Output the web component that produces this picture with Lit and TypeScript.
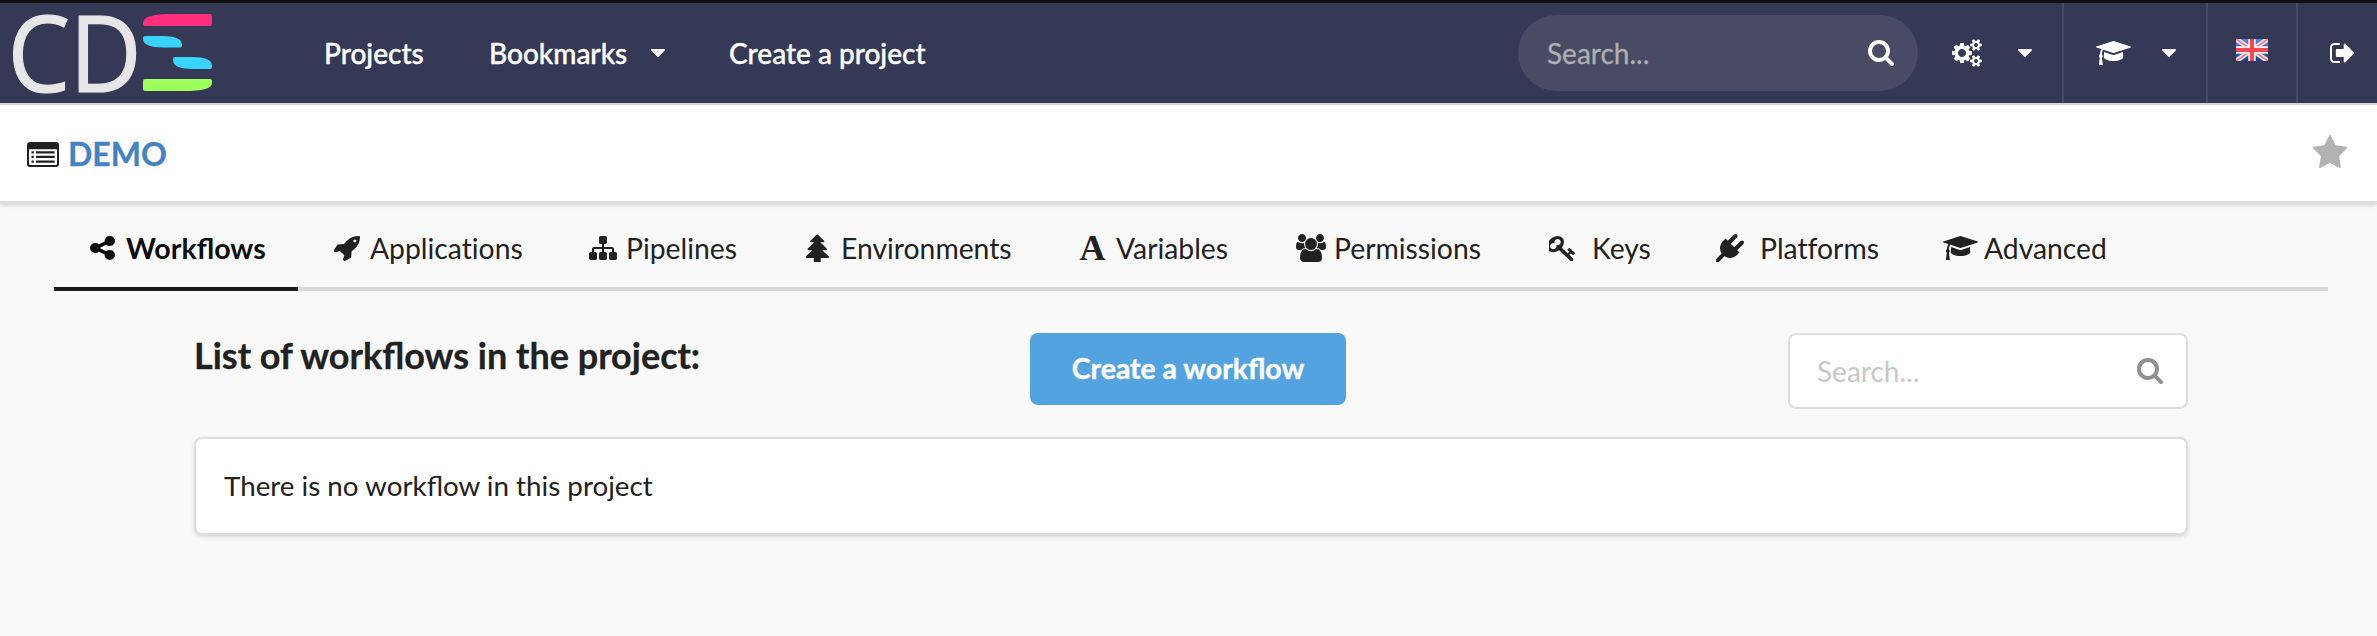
import { LitElement, html, svg, css } from "lit";
import { customElement, property } from "lit/decorators.js";

interface Glyph {
  box: string;
  body: unknown;
}

const glyphs: Record<string, Glyph> = {
  share: {
    box: "128 128 1536 1536",
    body: svg`<path d="M1344 1024q133 0 226.500 93.500t93.500 226.500-93.500 226.500-226.500 93.500-226.500-93.500-93.500-226.500q0-12 2-34l-360-180q-92 86-218 86-133 0-226.500-93.500t-93.500-226.500 93.500-226.500 226.500-93.500q126 0 218 86l360-180q-2-22-2-34 0-133 93.500-226.500t226.500-93.500 226.500 93.500 93.500 226.500-93.500 226.500-226.500 93.500q-126 0-218-86l-360 180q2 22 2 34t-2 34l360 180q92-86 218-86z"/>`,
  },
  rocket: {
    box: "52 128 1612 1620",
    body: svg`<path d="M1440 448q0-40-28-68t-68-28-68 28-28 68 28 68 68 28 68-28 28-68zm224-288q0 249-75.500 430.500t-253.500 360.500q-81 80-195 176l-20 379q-2 16-16 26l-384 224q-7 4-16 4-12 0-23-9l-64-64q-13-14-8-32l85-276-281-281-276 85q-3 1-9 1-14 0-23-9l-64-64q-17-19-5-39l224-384q10-14 26-16l379-20q96-114 176-195 188-187 358-258t431-71q14 0 24 9.500t10 22.500z"/>`,
  },
  sitemap: {
    box: "0 128 1792 1536",
    body: svg`<path d="M1792 1248v320q0 40-28 68t-68 28h-320q-40 0-68-28t-28-68v-320q0-40 28-68t68-28h96v-192h-512v192h96q40 0 68 28t28 68v320q0 40-28 68t-68 28h-320q-40 0-68-28t-28-68v-320q0-40 28-68t68-28h96v-192h-512v192h96q40 0 68 28t28 68v320q0 40-28 68t-68 28h-320q-40 0-68-28t-28-68v-320q0-40 28-68t68-28h96v-192q0-52 38-90t90-38h512v-192h-96q-40 0-68-28t-28-68v-320q0-40 28-68t68-28h320q40 0 68 28t28 68v320q0 40-28 68t-68 28h-96v192h512q52 0 90 38t38 90v192h96q40 0 68 28t28 68z"/>`,
  },
  tree: {
    box: "176 0 1440 1824",
    body: svg`<path d="M1616 1504q0 26-19 45t-45 19h-462q1 17 6 87.500t5 108.500q0 25-18 42.500t-43 17.500h-320q-25 0-43-17.500t-18-42.500q0-38 5-108.500t6-87.500h-462q-26 0-45-19t-19-45 19-45l402-403h-229q-26 0-45-19t-19-45 19-45l402-403h-197q-26 0-45-19t-19-45 19-45l384-384q19-19 45-19t45 19l384 384q19 19 19 45t-19 45-45 19h-197l402 403q19 19 19 45t-19 45-45 19h-229l402 403q19 19 19 45z"/>`,
  },
  users: {
    box: "0 0 1920 1792",
    body: svg`<path d="M593 896q-162 5-265 128h-134q-82 0-138-40.500t-56-118.500q0-353 124-353 6 0 43.500 21t97.500 42.500 119 21.500q67 0 133-23-5 37-5 66 0 139 81 256zm1071 637q0 120-73 189.500t-194 69.500h-874q-121 0-194-69.500t-73-189.500q0-53 3.500-103.500t14-109 26.500-108.500 43-97.500 62-81 85.500-53.500 111.500-20q10 0 43 21.500t73 48 107 48 135 21.500 135-21.500 107-48 73-48 43-21.500q61 0 111.500 20t85.500 53.500 62 81 43 97.500 26.500 108.500 14 109 3.500 103.500zm-1024-1277q0 106-75 181t-181 75-181-75-75-181 75-181 181-75 181 75 75 181zm704 384q0 159-112.500 271.500t-271.500 112.500-271.500-112.500-112.500-271.500 112.500-271.500 271.500-112.500 271.500 112.500 112.500 271.500zm576 225q0 78-56 118.500t-138 40.500h-134q-103-123-265-128 81-117 81-256 0-29-5-66 66 23 133 23 59 0 119-21.500t97.500-42.500 43.500-21q124 0 124 353zm-128-609q0 106-75 181t-181 75-181-75-75-181 75-181 181-75 181 75 75 181z"/>`,
  },
  key: {
    box: "128 128 1556 1576",
    body: svg`<path d="M832 512q0-80-56-136t-136-56-136 56-56 136q0 42 19 83-41-19-83-19-80 0-136 56t-56 136 56 136 136 56 136-56 56-136q0-42-19-83 41 19 83 19 80 0 136-56t56-136zm851 704q0 17-49 66t-66 49q-9 0-28.500-16t-36.500-33-38.500-40-24.500-26l-96 96 220 220q28 28 28 68 0 42-39 81t-81 39q-40 0-68-28l-671-671q-176 131-365 131-163 0-265.500-102.500t-102.500-265.500q0-160 95-313t248-248 313-95q163 0 265.500 102.500t102.500 265.500q0 189-131 365l355 355 96-96q-3-3-26-24.500t-40-38.500-33-36.500-16-28.500q0-17 49-66t66-49q13 0 23 10 6 6 46 44.500t82 79.500 86.500 86 73 78 28.500 41z"/>`,
  },
  plug: {
    box: "0 0 1792 1792",
    body: svg`<path d="M1755 453q37 38 37 90.500t-37 90.500l-401 400 150 150-160 160q-163 163-389.500 186.500t-411.500-100.500l-362 362h-181v-181l362-362q-124-185-100.500-411.500t186.500-389.500l160-160 150 150 400-401q38-37 91-37t90 37 37 90.500-37 90.500l-400 401 234 234 401-400q38-37 91-37t90 37z"/>`,
  },
  cap: {
    box: "0 128 2304 1536",
    body: svg`<path d="M1774 836l18 316q4 69-82 128t-235 93.500-323 34.500-323-34.500-235-93.500-82-128l18-316 574 181q22 7 48 7t48-7zm530-324q0 23-22 31l-1120 352q-4 1-10 1t-10-1l-652-206q-43 34-71 111.500t-34 178.500q63 36 63 109 0 69-58 107l58 433q2 14-8 25-9 11-24 11h-192q-15 0-24-11-10-11-8-25l58-433q-58-38-58-107 0-73 65-111 11-207 98-330l-333-104q-22-8-22-31t22-31l1120-352q4-1 10-1t10 1l1120 352q22 8 22 31z"/>`,
  },
  cogs: {
    box: "0 0 1920 1792",
    body: svg`<path d="M896 896q0-106-75-181t-181-75-181 75-75 181 75 181 181 75 181-75 75-181zm768 512q0-52-38-90t-90-38-90 38-38 90q0 53 37.500 90.500t90.500 37.500 90.500-37.500 37.500-90.500zm0-1024q0-52-38-90t-90-38-90 38-38 90q0 53 37.500 90.500t90.500 37.500 90.500-37.500 37.500-90.500zm-384 421v185q0 10-7 19.500t-16 10.500l-155 24q-11 35-32 76 34 48 90 115 7 11 7 20 0 12-7 19-23 30-82.500 89.500t-78.500 59.500q-11 0-21-7l-115-90q-37 19-77 31-11 108-23 155-7 24-30 24h-186q-11 0-20-7.500t-10-17.500l-23-153q-34-10-75-31l-118 89q-7 7-20 7-11 0-21-8-144-133-144-160 0-9 7-19 10-14 41-53t47-61q-23-44-35-82l-152-24q-10-1-17-9.500t-7-19.500v-185q0-10 7-19.500t16-10.500l155-24q11-35 32-76-34-48-90-115-7-11-7-20 0-12 7-20 22-30 82-89t79-59q11 0 21 7l115 90q34-18 77-32 11-108 23-154 7-24 30-24h186q11 0 20 7.500t10 17.500l23 153q34 10 75 31l118-89q8-7 20-7 11 0 21 8 144 133 144 160 0 8-7 19-12 16-42 54t-45 60q23 48 34 82l152 23q10 2 17 10.500t7 19.500zm640 533v140q0 16-149 31-12 27-30 52 51 113 51 138 0 4-4 7-122 71-124 71-8 0-46-47t-52-68q-20 2-30 2t-30-2q-14 21-52 68t-46 47q-2 0-124-71-4-3-4-7 0-25 51-138-18-25-30-52-149-15-149-31v-140q0-16 149-31 13-29 30-52-51-113-51-138 0-4 4-7 4-2 35-20t59-34 30-16q8 0 46 46.500t52 67.500q20-2 30-2t30 2q51-71 92-112l6-2q4 0 124 70 4 3 4 7 0 25-51 138 17 23 30 52 149 15 149 31zm0-1024v140q0 16-149 31-12 27-30 52 51 113 51 138 0 4-4 7-122 71-124 71-8 0-46-47t-52-68q-20 2-30 2t-30-2q-14 21-52 68t-46 47q-2 0-124-71-4-3-4-7 0-25 51-138-18-25-30-52-149-15-149-31v-140q0-16 149-31 13-29 30-52-51-113-51-138 0-4 4-7 4-2 35-20t59-34 30-16q8 0 46 46.500t52 67.500q20-2 30-2t30 2q51-71 92-112l6-2q4 0 124 70 4 3 4 7 0 25-51 138 17 23 30 52 149 15 149 31z"/>`,
  },
  search: {
    box: "64 128 1664 1664",
    body: svg`<path d="M1216 832q0-185-131.500-316.500t-316.500-131.500-316.500 131.500-131.500 316.500 131.500 316.500 316.500 131.500 316.500-131.500 131.500-316.500zm512 832q0 52-38 90t-90 38q-54 0-90-38l-343-342q-179 124-399 124-143 0-273.500-55.500t-225-150-150-225-55.500-273.500 55.500-273.500 150-225 225-150 273.500-55.500 273.500 55.500 225 150 150 225 55.500 273.500q0 220-124 399l343 343q37 37 37 90z"/>`,
  },
  signout: {
    box: "64 256 1568 1280",
    body: svg`<path d="M704 1440q0 4 1 20t.5 26.500-3 23.500-10 19.500-20.500 6.500h-320q-119 0-203.500-84.500t-84.500-203.500v-704q0-119 84.500-203.500t203.500-84.500h320q13 0 22.500 9.500t9.500 22.500q0 4 1 20t.5 26.500-3 23.500-10 19.500-20.500 6.500h-320q-66 0-113 47t-47 113v704q0 66 47 113t113 47h312l11.500 1 11.500 3 8 5.500 7 9 2 13.500zm928-544q0 26-19 45l-544 544q-19 19-45 19t-45-19-19-45v-288h-448q-26 0-45-19t-19-45v-384q0-26 19-45t45-19h448v-288q0-26 19-45t45-19 45 19l544 544q19 19 19 45z"/>`,
  },
  star: {
    box: "64 32 1664 1588",
    body: svg`<path d="M1728 647q0 22-26 48l-363 354 86 500q1 7 1 20 0 21-10.500 35.500t-30.500 14.500q-19 0-40-12l-449-236-449 236q-22 12-40 12-21 0-31.500-14.500t-10.500-35.500q0-6 2-20l86-500-364-354q-25-27-25-48 0-37 56-46l502-73 225-455q19-41 49-41t49 41l225 455 502 73q56 9 56 46z"/>`,
  },
  caret: {
    box: "384 640 1024 576",
    body: svg`<path d="M1408 704q0 26-19 45l-448 448q-19 19-45 19t-45-19l-448-448q-19-19-19-45t19-45 45-19h896q26 0 45 19t19 45z"/>`,
  },
  list: {
    box: "0 0 32 25",
    body: svg`<path fill-rule="evenodd" d="M3 0h26a3 3 0 0 1 3 3v19a3 3 0 0 1-3 3H3a3 3 0 0 1-3-3V3a3 3 0 0 1 3-3zM2 7.300v14.500q0 1.200 1.200 1.200h25.600q1.200 0 1.200-1.200V7.300z"/><path d="M4.500 9.200h2.300v2.300H4.500zm0 4.600h2.300v2.300H4.500zm0 4.600h2.300v2.300H4.500zM9 9.200h18.600v2.300H9zm0 4.600h18.600v2.300H9zm0 4.600h18.600v2.300H9z"/>`,
  },
};

@customElement("ui-icon")
class UiIcon extends LitElement {
  @property() name = "";
  @property({ type: Number }) w = 28;
  @property({ type: Number }) h = 28;

  static styles = css`
    :host {
      display: inline-flex;
      flex: none;
      align-items: center;
      justify-content: center;
    }
    .glyph {
      display: block;
      flex: none;
      fill: currentColor;
    }
  `;

  render() {
    const g = glyphs[this.name];
    return html`<svg class="glyph" width=${this.w} height=${this.h} viewBox=${g.box} preserveAspectRatio="none">
      ${g.body}
    </svg>`;
  }
}

interface Tab {
  icon: string;
  label: string;
  w: number;
  h: number;
  width: number;
  spaced?: boolean;
}

const tabs: Tab[] = [
  { icon: "share", label: "Workflows", w: 25, h: 24, width: 244 },
  { icon: "rocket", label: "Applications", w: 26, h: 25, width: 256 },
  { icon: "sitemap", label: "Pipelines", w: 28, h: 24, width: 215 },
  { icon: "tree", label: "Environments", w: 23, h: 28, width: 275 },
  { icon: "letter", label: "Variables", w: 26, h: 24, width: 218 },
  { icon: "users", label: "Permissions", w: 30, h: 28, width: 251 },
  { icon: "key", label: "Keys", w: 26, h: 25, width: 168, spaced: true },
  { icon: "plug", label: "Platforms", w: 28, h: 28, width: 231, spaced: true },
  { icon: "cap", label: "Advanced", w: 35, h: 24, width: 226 },
];

@customElement("app-root")
class AppRoot extends LitElement {
  static styles = css`
    :host {
      display: block;
      box-sizing: border-box;
      height: 636px;
      overflow: hidden;
      background: #f9f9f9;
      color: #212121;
      font: 28px/34px Lato, sans-serif;
    }
    * {
      box-sizing: border-box;
    }
    .nav {
      display: flex;
      align-items: stretch;
      height: 105px;
      border-top: 3px solid #111;
      border-bottom: 2px solid #dededf;
      background: #353956;
      color: #fff;
    }
    .logo {
      flex: none;
      width: 292px;
      height: 100px;
    }
    .letters {
      font: 107px "Open Sans", sans-serif;
      fill: #e6e6e6;
      stroke: #e6e6e6;
      stroke-width: 1.2px;
    }
    .link {
      display: flex;
      align-items: center;
      padding: 0 32px 1px;
      white-space: nowrap;
      font-weight: 500;
      -webkit-text-stroke: 0.4px #fff;
    }
    .projects {
      width: 165px;
    }
    .bookmarks {
      width: 240px;
      justify-content: space-between;
    }
    .spacer {
      flex: 1;
    }
    .pill {
      display: flex;
      align-items: center;
      justify-content: space-between;
      width: 400px;
      height: 76px;
      margin-top: 12px;
      padding: 0 24px 0 29px;
      border-radius: 38px;
      background: #484b63;
      color: #b0b0b1;
      -webkit-text-stroke: 0.3px #b0b0b1;
    }
    .pill-icon {
      color: #fff;
    }
    .tool {
      display: flex;
      align-items: center;
      border-left: 2px solid #464a64;
    }
    .tool-cogs {
      width: 144px;
      padding-left: 34px;
      gap: 36px;
      border-left: none;
    }
    .tool-help {
      width: 144px;
      padding-left: 32px;
      gap: 31px;
    }
    .tool-flag {
      width: 90px;
      padding: 0 0 6px 28px;
    }
    .tool-exit {
      width: 81px;
      padding-left: 32px;
    }
    .title {
      display: flex;
      align-items: center;
      justify-content: space-between;
      height: 99px;
      padding: 0 30px 0 27px;
      background: #fff;
      border-bottom: 3px solid #dededf;
      box-shadow: 0 1px 4px rgba(34, 36, 38, 0.2);
    }
    .project {
      display: flex;
      align-items: center;
      gap: 9px;
      padding-top: 2px;
      color: #4183c4;
      font-size: 32px;
      line-height: 40px;
      font-weight: 700;
      -webkit-text-stroke: 0.3px #4183c4;
    }
    .project-icon {
      color: #212121;
    }
    .star {
      color: #b2b2b2;
      padding-bottom: 4px;
    }
    .tabs {
      display: flex;
      height: 87px;
      margin: 0 49px 0 54px;
      border-bottom: 4px solid #d9d9d9;
      font-size: 28.3px;
    }
    .tab {
      display: flex;
      flex: none;
      align-items: center;
      height: 87px;
      padding: 5px 0 4px 32px;
      white-space: nowrap;
      font-variant-ligatures: none;
    }
    .tab.active {
      border-bottom: 4px solid #1b1c1d;
      padding-bottom: 0;
      color: #0d0d0d;
      font-size: 28.6px;
      font-weight: 700;
      font-variant-ligatures: normal;
    }
    .tab-icon {
      width: 33px;
      margin-right: 7px;
    }
    .letter {
      display: inline-block;
      text-align: center;
      font: bold 36px/34px "Liberation Serif", serif;
    }
    .gap {
      width: 7px;
    }
    .content {
      margin: 42px 189px 0 194px;
    }
    .head {
      display: grid;
      grid-template-columns: 836px 316px 1fr;
      align-items: start;
      height: 104px;
    }
    .heading {
      margin: 0;
      font-size: 36px;
      line-height: 44px;
      font-weight: 700;
      -webkit-text-stroke: 0.3px #212121;
    }
    .button {
      display: flex;
      align-items: center;
      justify-content: center;
      height: 72px;
      padding-bottom: 3px;
      border-radius: 8px;
      background: #54a3e1;
      color: #fff;
      font-size: 28.4px;
      font-weight: 700;
      -webkit-text-stroke: 0.4px #fff;
    }
    .filter {
      display: flex;
      align-items: center;
      justify-content: space-between;
      justify-self: end;
      width: 400px;
      height: 76px;
      padding: 0 23px 0 27px;
      border: 2px solid #dededf;
      border-radius: 8px;
      background: #fff;
      color: #c7c7c7;
    }
    .filter-icon {
      color: #909090;
    }
    .panel {
      display: flex;
      align-items: center;
      height: 98px;
      padding: 0 28px;
      border: 2px solid #dededf;
      border-radius: 8px;
      background: #fff;
      box-shadow: 0 2px 4px rgba(34, 36, 38, 0.15);
      font-size: 27.75px;
    }
  `;

  private logo() {
    return html`<svg class="logo" viewBox="0 3 292 100">
      <text class="letters" transform="translate(7.500 91.500) scale(.93 1)">C</text>
      <text class="letters" transform="translate(69.500 91.500) scale(.93 1)">D</text>
      <path fill="#ff2e7e" d="M171 14h39q2 0 2 2v8q0 2-2 2h-65q-2 0-2-2v-1q0-9 28-9z" />
      <path fill="#38d4ff" d="M145 36h17q20 0 20 9v.500q0 2-2 2h-17q-20 0-20-9v-.500q0-2 2-2z" />
      <path fill="#38d4ff" d="M175 57h17q20 0 20 9v1q0 2-2 2h-17q-20 0-20-9v-1q0-2 2-2z" />
      <path fill="#9dff5c" d="M145 79h65q2 0 2 2v2q0 8-28 8h-39q-2 0-2-2v-8q0-2 2-2z" />
    </svg>`;
  }

  private flag() {
    return html`<svg width="32" height="22" viewBox="0 0 32 22">
      <defs>
        <linearGradient id="sheen" x1="0" y1="0" x2="0" y2="1">
          <stop offset="0" stop-color="#5f86cc" />
          <stop offset="1" stop-color="#1d3c8c" />
        </linearGradient>
      </defs>
      <rect width="32" height="22" fill="url(#sheen)" />
      <path d="M0 0l32 22M32 0L0 22" stroke="#e3e6f2" stroke-width="5" />
      <path d="M0 0l32 22M32 0L0 22" stroke="#f0808a" stroke-width="1.800" />
      <path d="M16 0v22M0 11h32" stroke="#f7eef2" stroke-width="7.500" />
      <path d="M16 0v22M0 11h32" stroke="#f5484f" stroke-width="4" />
    </svg>`;
  }

  private tab(t: Tab, active: boolean) {
    return html`<div class="tab ${active ? "active" : ""}" style="width:${t.width}px">
      ${t.icon === "letter"
        ? html`<span class="tab-icon letter">A</span>`
        : html`<ui-icon class="tab-icon" name=${t.icon} w=${t.w} h=${t.h}></ui-icon>`}
      ${t.spaced ? html`<span class="gap"></span>` : null}
      <span>${t.label}</span>
    </div>`;
  }

  render() {
    return html`
      <nav class="nav">
        ${this.logo()}
        <div class="link projects">Projects</div>
        <div class="link bookmarks">
          <span>Bookmarks</span>
          <ui-icon name="caret" w="14" h="8"></ui-icon>
        </div>
        <div class="link">Create a project</div>
        <div class="spacer"></div>
        <div class="pill">
          <span>Search...</span>
          <ui-icon class="pill-icon" name="search" w="26" h="26"></ui-icon>
        </div>
        <div class="tool tool-cogs">
          <ui-icon name="cogs" w="30" h="28"></ui-icon>
          <ui-icon name="caret" w="14" h="8"></ui-icon>
        </div>
        <div class="tool tool-help">
          <ui-icon name="cap" w="35" h="24"></ui-icon>
          <ui-icon name="caret" w="14" h="8"></ui-icon>
        </div>
        <div class="tool tool-flag">${this.flag()}</div>
        <div class="tool tool-exit"><ui-icon name="signout" w="24" h="20"></ui-icon></div>
      </nav>
      <header class="title">
        <div class="project">
          <ui-icon class="project-icon" name="list" w="32" h="25"></ui-icon>
          <span>DEMO</span>
        </div>
        <ui-icon class="star" name="star" w="34" h="33"></ui-icon>
      </header>
      <div class="tabs">${tabs.map((t, i) => this.tab(t, i === 0))}</div>
      <main class="content">
        <div class="head">
          <h3 class="heading">List of workflows in the project:</h3>
          <div class="button">Create a workflow</div>
          <div class="filter">
            <span>Search...</span>
            <ui-icon class="filter-icon" name="search" w="26" h="26"></ui-icon>
          </div>
        </div>
        <div class="panel">There is no workflow in this project</div>
      </main>
    `;
  }
}
